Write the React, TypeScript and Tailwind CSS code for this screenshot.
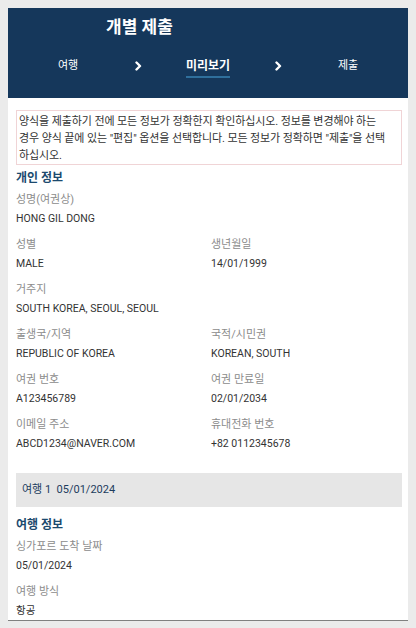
const font = "font-['Roboto','Noto_Sans_CJK_KR',sans-serif]";

const personal = [
  [{ label: "성명(여권상)", value: "HONG GIL DONG" }],
  [
    { label: "성별", value: "MALE" },
    { label: "생년월일", value: "14/01/1999" },
  ],
  [{ label: "거주지", value: "SOUTH KOREA, SEOUL, SEOUL" }],
  [
    { label: "출생국/지역", value: "REPUBLIC OF KOREA" },
    { label: "국적/시민권", value: "KOREAN, SOUTH" },
  ],
  [
    { label: "여권 번호", value: "A123456789" },
    { label: "여권 만료일", value: "02/01/2034" },
  ],
  [
    { label: "이메일 주소", value: "ABCD1234@NAVER.COM" },
    { label: "휴대전화 번호", value: "+82 0112345678" },
  ],
];

const travel = [
  [{ label: "싱가포르 도착 날짜", value: "05/01/2024" }],
  [{ label: "여행 방식", value: "항공" }],
];

function Chevron() {
  return (
    <svg width="7" height="10" viewBox="0 0 7 10" fill="none">
      <path d="M1.5 1.5 L5 5 L1.5 8.5" stroke="white" strokeWidth="2.4" strokeLinecap="round" strokeLinejoin="round" />
    </svg>
  );
}

function Field({ label, value }: { label: string; value: string }) {
  return (
    <div>
      <div className="text-[11px] leading-[19px] text-[#8c8c8c]">{label}</div>
      <div className="text-[10.5px] leading-[19px] text-[#333333]">{value}</div>
    </div>
  );
}

function Rows({ rows }: { rows: { label: string; value: string }[][] }) {
  return (
    <div className="flex flex-col gap-[7px]">
      {rows.map((row, i) => (
        <div key={i} className="grid grid-cols-[195px_1fr]">
          {row.map((f) => (
            <Field key={f.label} label={f.label} value={f.value} />
          ))}
        </div>
      ))}
    </div>
  );
}

export default function App() {
  return (
    <div className={`min-h-screen bg-[#ebebeb] px-2 pt-2 pb-[10px] ${font}`}>
      <div className="bg-white border-b border-[#808080]">
        <div className="h-[90px] bg-[#15375b] pt-[7px]">
          <h1 className="pl-[98px] text-[17px] leading-[24px] font-bold text-white">개별 제출</h1>
          <div className="mt-[18px] grid grid-cols-5 px-[25px] items-start justify-items-center text-white">
            <span className="text-[11px] leading-[18px]">여행</span>
            <span className="h-[18px] flex items-center"><Chevron /></span>
            <span className="text-[12px] leading-[18px] font-bold pb-[1px] border-b-2 border-[#2f6f9c]">미리보기</span>
            <span className="h-[18px] flex items-center"><Chevron /></span>
            <span className="text-[11px] leading-[18px]">제출</span>
          </div>
        </div>

        <div className="pl-2 pr-[6px] pt-3">
          <div className="border border-[#f0d4d6] px-[2px] pt-[2px] text-[11px] tracking-[-0.1px] leading-[17px] text-[#333333] whitespace-nowrap overflow-hidden">
            양식을 제출하기 전에 모든 정보가 정확한지 확인하십시오. 정보를 변경해야 하는
            <br />
            경우 양식 끝에 있는 "편집" 옵션을 선택합니다. 모든 정보가 정확하면 "제출"을 선택
            <br />
            하십시오.
          </div>

          <h2 className="mt-[3px] mb-[2px] text-[12px] leading-[20px] font-bold text-[#1c4a6e]">개인 정보</h2>
          <Rows rows={personal} />

          <div className="mt-[20px] h-[34px] bg-[#e6e6e6] flex items-center px-[6px] text-[11px] text-[#1d3d5e]">
            여행 1&nbsp;&nbsp;05/01/2024
          </div>

          <h2 className="mt-[8px] mb-[2px] text-[12px] leading-[20px] font-bold text-[#1c4a6e]">여행 정보</h2>
          <Rows rows={travel} />
        </div>
      </div>
    </div>
  );
}
